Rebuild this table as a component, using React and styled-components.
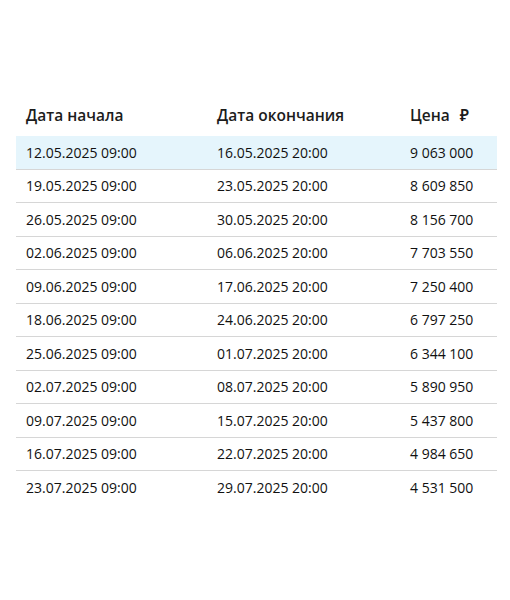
import React from 'react';
import styled, { createGlobalStyle } from 'styled-components';

const GlobalStyle = createGlobalStyle`
  body {
    margin: 0;
    background: #ffffff;
    font-family: "Open Sans", "Noto Sans", sans-serif;
  }
`;

const Page = styled.div`
  padding: 94px 13px 0 16px;
`;

const Table = styled.table`
  width: 481px;
  table-layout: fixed;
  border-collapse: collapse;
  font-size: 14px;
  color: #111;
`;

const HeadCell = styled.th`
  text-align: left;
  font-weight: 600;
  font-size: 15.5px;
  height: 42px;
  padding: 0 0 0 10px;
  width: ${p => p.$w}px;
  color: #1c1c1c;
`;

const Row = styled.tr`
  background: ${p => (p.$active ? '#e5f5fc' : 'transparent')};
  border-bottom: ${p => (p.$last ? 'none' : '1px solid #d6d6d6')};
`;

const Cell = styled.td`
  height: 32.5px;
  padding: 0 0 0 10px;
`;

const Ruble = styled.span`
  margin-left: 6px;
`;

const rows = [
  ['12.05.2025 09:00', '16.05.2025 20:00', '9 063 000'],
  ['19.05.2025 09:00', '23.05.2025 20:00', '8 609 850'],
  ['26.05.2025 09:00', '30.05.2025 20:00', '8 156 700'],
  ['02.06.2025 09:00', '06.06.2025 20:00', '7 703 550'],
  ['09.06.2025 09:00', '17.06.2025 20:00', '7 250 400'],
  ['18.06.2025 09:00', '24.06.2025 20:00', '6 797 250'],
  ['25.06.2025 09:00', '01.07.2025 20:00', '6 344 100'],
  ['02.07.2025 09:00', '08.07.2025 20:00', '5 890 950'],
  ['09.07.2025 09:00', '15.07.2025 20:00', '5 437 800'],
  ['16.07.2025 09:00', '22.07.2025 20:00', '4 984 650'],
  ['23.07.2025 09:00', '29.07.2025 20:00', '4 531 500'],
];

export default function App() {
  return (
    <>
      <GlobalStyle />
      <Page>
        <Table>
          <thead>
            <tr>
              <HeadCell $w={181}>Дата начала</HeadCell>
              <HeadCell $w={183}>Дата окончания</HeadCell>
              <HeadCell $w={87}>Цена <Ruble>₽</Ruble></HeadCell>
            </tr>
          </thead>
          <tbody>
            {rows.map((r, i) => (
              <Row key={i} $active={i === 0} $last={i === rows.length - 1}>
                <Cell>{r[0]}</Cell>
                <Cell>{r[1]}</Cell>
                <Cell>{r[2]}</Cell>
              </Row>
            ))}
          </tbody>
        </Table>
      </Page>
    </>
  );
}
